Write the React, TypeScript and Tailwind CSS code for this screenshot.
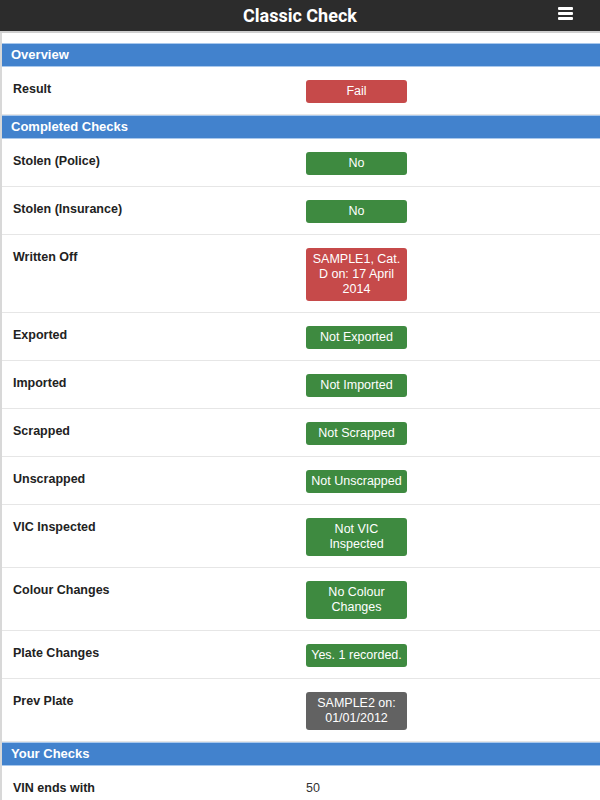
import React from 'react';

type Tone = 'red' | 'green' | 'gray';

const TONES: Record<Tone, string> = {
    red: 'bg-[#c64a4a]',
    green: 'bg-[#3e8a40]',
    gray: 'bg-[#626262]',
};

const COMPLETED: { label: string; value: string; tone: Tone }[] = [
    { label: 'Stolen (Police)', value: 'No', tone: 'green' },
    { label: 'Stolen (Insurance)', value: 'No', tone: 'green' },
    { label: 'Written Off', value: 'SAMPLE1, Cat. D on: 17 April 2014', tone: 'red' },
    { label: 'Exported', value: 'Not Exported', tone: 'green' },
    { label: 'Imported', value: 'Not Imported', tone: 'green' },
    { label: 'Scrapped', value: 'Not Scrapped', tone: 'green' },
    { label: 'Unscrapped', value: 'Not Unscrapped', tone: 'green' },
    { label: 'VIC Inspected', value: 'Not VIC Inspected', tone: 'green' },
    { label: 'Colour Changes', value: 'No Colour Changes', tone: 'green' },
    { label: 'Plate Changes', value: 'Yes. 1 recorded.', tone: 'green' },
    { label: 'Prev Plate', value: 'SAMPLE2 on: 01/01/2012', tone: 'gray' },
];

const SectionBar = ({ title }: { title: string }) => (
    <div className="h-[24px] bg-[#4282cd] border-y border-[#a9c8ec] flex items-center px-[9px]">
        <span className="text-[13px] font-bold text-white">{title}</span>
    </div>
);

const Row = ({ label, value, tone }: { label: string; value: string; tone: Tone }) => (
    <div className="grid grid-cols-2 pt-[13px] pb-[11px] border-b border-[#e6e6e6]">
        <div className="pl-[11px] text-[12.5px] leading-[18px] font-bold text-[#222]">{label}</div>
        <div className="pl-[5px]">
            <div className={`w-[101px] rounded-[3px] px-[2px] py-[4px] text-center text-[12.5px] leading-[15px] text-white ${TONES[tone]}`}>
                {value}
            </div>
        </div>
    </div>
);

export default function App() {
    return (
        <div className="w-[600px] h-[800px] overflow-hidden bg-white font-['Liberation_Sans',Arial,sans-serif]">
            {/* HEADER */}
            <header className="h-[33px] bg-[#2c2c2c] border-b-2 border-[#cfcfcf] flex items-center justify-center relative">
                <h1 className="text-[18px] font-bold text-white font-['Roboto',sans-serif]">Classic Check</h1>
                <div className="absolute right-[27px] top-[7px] flex flex-col gap-[2px]">
                    <span className="block w-[15px] h-[3px] bg-white rounded-[1px]"></span>
                    <span className="block w-[15px] h-[3px] bg-white rounded-[1px]"></span>
                    <span className="block w-[15px] h-[3px] bg-white rounded-[1px]"></span>
                </div>
            </header>

            <div className="border-l-2 border-[#d8d8d8] pt-[10px]">
                <SectionBar title="Overview" />
                <Row label="Result" value="Fail" tone="red" />

                <SectionBar title="Completed Checks" />
                {COMPLETED.map((c) => (
                    <Row key={c.label} {...c} />
                ))}

                <SectionBar title="Your Checks" />
                <div className="grid grid-cols-2 pt-[13px] pb-3">
                    <div className="pl-[11px] text-[12.5px] leading-[18px] font-bold text-[#222]">VIN ends with</div>
                    <div className="pl-[5px] text-[12.5px] leading-[18px] text-[#333]">50</div>
                </div>
            </div>
        </div>
    );
}
